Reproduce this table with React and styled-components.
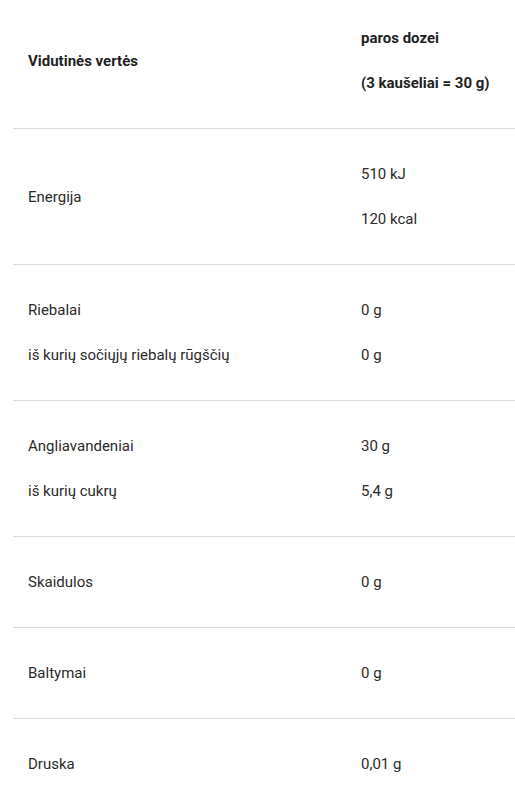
import React from "react";
import styled, { createGlobalStyle } from "styled-components";

const Global = createGlobalStyle`
  html, body { margin: 0; padding: 0; background: #fff; }
  body { font-family: Roboto, "Noto Sans", Arial, sans-serif; overflow: hidden; }
`;

const Wrap = styled.div`
  padding-left: 13px;
  margin-top: -7px;
`;

const Table = styled.div`
  display: flex;
  flex-direction: column;
  width: 502px;
`;

const Row = styled.div`
  display: grid;
  grid-template-columns: 333px 1fr;
  border-bottom: ${(p) => (p.$last ? "none" : "1px solid #dcdcdc")};
`;

const Cell = styled.div`
  display: flex;
  flex-direction: column;
  justify-content: center;
  gap: 23px;
  padding: 34px 15px;
  font-size: 15px;
  line-height: 22px;
  color: ${(p) => (p.$head ? "#1f1f1f" : "#2b2b2b")};
  font-weight: ${(p) => (p.$head ? 700 : 400)};
`;

const Line = styled.div`
  white-space: nowrap;
`;

const rows = [
  { head: true, l: ["Vidutinės vertės"], r: ["paros dozei", "(3 kaušeliai = 30 g)"] },
  { l: ["Energija"], r: ["510 kJ", "120 kcal"] },
  { l: ["Riebalai", "iš kurių sočiųjų riebalų rūgščių"], r: ["0 g", "0 g"] },
  { l: ["Angliavandeniai", "iš kurių cukrų"], r: ["30 g", "5,4 g"] },
  { l: ["Skaidulos"], r: ["0 g"] },
  { l: ["Baltymai"], r: ["0 g"] },
  { l: ["Druska"], r: ["0,01 g"] },
];

export default function App() {
  return (
    <>
      <Global />
      <Wrap>
        <Table>
          {rows.map((row, i) => (
            <Row key={i} $last={i === rows.length - 1}>
              <Cell $head={row.head}>
                {row.l.map((t, j) => (
                  <Line key={j}>{t}</Line>
                ))}
              </Cell>
              <Cell $head={row.head}>
                {row.r.map((t, j) => (
                  <Line key={j}>{t}</Line>
                ))}
              </Cell>
            </Row>
          ))}
        </Table>
      </Wrap>
    </>
  );
}
